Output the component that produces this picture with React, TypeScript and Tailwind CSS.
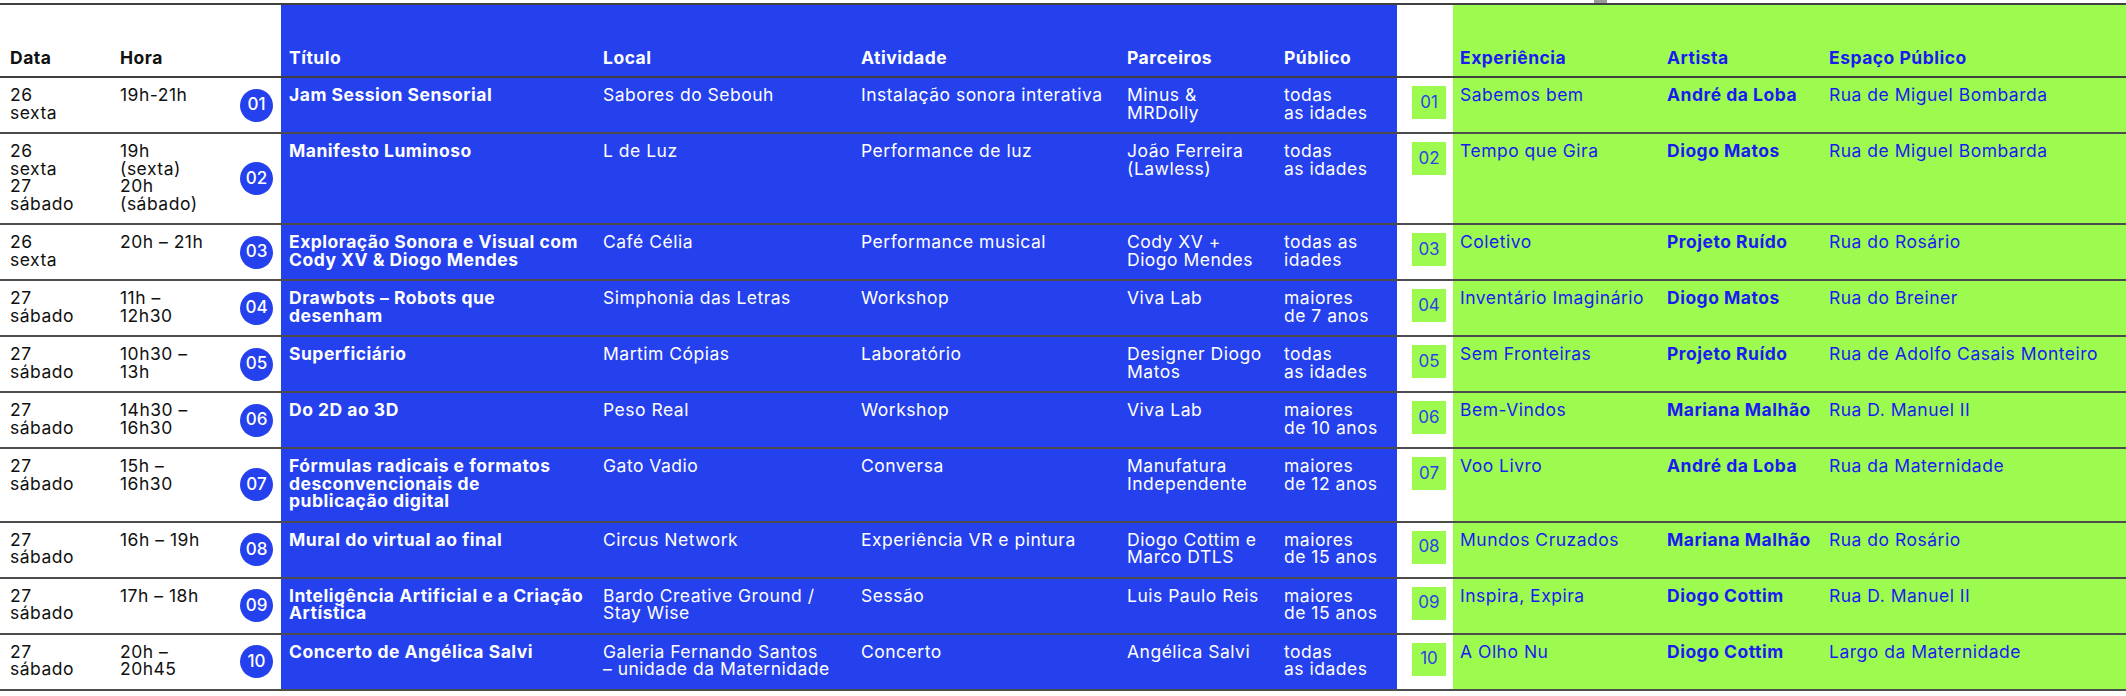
type Row = {
  data: string;
  hora: string;
  n: string;
  titulo: string;
  local: string;
  atividade: string;
  parceiros: string;
  publico: string;
  experiencia: string;
  artista: string;
  espaco: string;
};

const rows: Row[] = [
  { data: "26\nsexta", hora: "19h-21h", n: "01", titulo: "Jam Session Sensorial", local: "Sabores do Sebouh", atividade: "Instalação sonora interativa", parceiros: "Minus &\nMRDolly", publico: "todas\nas idades", experiencia: "Sabemos bem", artista: "André da Loba", espaco: "Rua de Miguel Bombarda" },
  { data: "26\nsexta\n27\nsábado", hora: "19h\n(sexta)\n20h\n(sábado)", n: "02", titulo: "Manifesto Luminoso", local: "L de Luz", atividade: "Performance de luz", parceiros: "João Ferreira\n(Lawless)", publico: "todas\nas idades", experiencia: "Tempo que Gira", artista: "Diogo Matos", espaco: "Rua de Miguel Bombarda" },
  { data: "26\nsexta", hora: "20h – 21h", n: "03", titulo: "Exploração Sonora e Visual com\nCody XV & Diogo Mendes", local: "Café Célia", atividade: "Performance musical", parceiros: "Cody XV +\nDiogo Mendes", publico: "todas as\nidades", experiencia: "Coletivo", artista: "Projeto Ruído", espaco: "Rua do Rosário" },
  { data: "27\nsábado", hora: "11h –\n12h30", n: "04", titulo: "Drawbots – Robots que\ndesenham", local: "Simphonia das Letras", atividade: "Workshop", parceiros: "Viva Lab", publico: "maiores\nde 7 anos", experiencia: "Inventário Imaginário", artista: "Diogo Matos", espaco: "Rua do Breiner" },
  { data: "27\nsábado", hora: "10h30 –\n13h", n: "05", titulo: "Superficiário", local: "Martim Cópias", atividade: "Laboratório", parceiros: "Designer Diogo\nMatos", publico: "todas\nas idades", experiencia: "Sem Fronteiras", artista: "Projeto Ruído", espaco: "Rua de Adolfo Casais Monteiro" },
  { data: "27\nsábado", hora: "14h30 –\n16h30", n: "06", titulo: "Do 2D ao 3D", local: "Peso Real", atividade: "Workshop", parceiros: "Viva Lab", publico: "maiores\nde 10 anos", experiencia: "Bem-Vindos", artista: "Mariana Malhão", espaco: "Rua D. Manuel II" },
  { data: "27\nsábado", hora: "15h –\n16h30", n: "07", titulo: "Fórmulas radicais e formatos\ndesconvencionais de\npublicação digital", local: "Gato Vadio", atividade: "Conversa", parceiros: "Manufatura\nIndependente", publico: "maiores\nde 12 anos", experiencia: "Voo Livro", artista: "André da Loba", espaco: "Rua da Maternidade" },
  { data: "27\nsábado", hora: "16h – 19h", n: "08", titulo: "Mural do virtual ao final", local: "Circus Network", atividade: "Experiência VR e pintura", parceiros: "Diogo Cottim e\nMarco DTLS", publico: "maiores\nde 15 anos", experiencia: "Mundos Cruzados", artista: "Mariana Malhão", espaco: "Rua do Rosário" },
  { data: "27\nsábado", hora: "17h – 18h", n: "09", titulo: "Inteligência Artificial e a Criação\nArtística", local: "Bardo Creative Ground /\nStay Wise", atividade: "Sessão", parceiros: "Luis Paulo Reis", publico: "maiores\nde 15 anos", experiencia: "Inspira, Expira", artista: "Diogo Cottim", espaco: "Rua D. Manuel II" },
  { data: "27\nsábado", hora: "20h –\n20h45", n: "10", titulo: "Concerto de Angélica Salvi", local: "Galeria Fernando Santos\n– unidade da Maternidade", atividade: "Concerto", parceiros: "Angélica Salvi", publico: "todas\nas idades", experiencia: "A Olho Nu", artista: "Diogo Cottim", espaco: "Largo da Maternidade" },
];

const grid =
  "grid grid-cols-[120px_120px_41px_314px_258px_266px_157px_121px_56px_207px_162px_1fr]";

const blue = "bg-[#2541ed] text-white";
const green = "bg-[#9dfb4f] text-[#1a1af2]";
const cell = "pt-[8px] pb-[11px] whitespace-pre";

const App = () => {
  return (
    <div
      className="w-[2126px] h-[696px] bg-white text-[17.5px] leading-[17.5px] tracking-[0.5px] text-[#111]"
      style={{ fontFamily: "Inter, 'Liberation Sans', sans-serif" }}
    >
      {/* faixa de scroll no topo */}
      <div className="h-[3px] pl-[1594px]">
        <div className="w-[13px] h-[3px] bg-[#9a9a9a]"></div>
      </div>

      {/* cabeçalho */}
      <div className={`${grid} h-[75px] border-t-2 border-b-2 border-black/75 font-bold`}>
        <div className="flex items-end pl-[10px] pb-[10px]">Data</div>
        <div className="flex items-end pb-[10px]">Hora</div>
        <div></div>
        <div className={`${blue} flex items-end pl-[8px] pb-[10px]`}>Título</div>
        <div className={`${blue} flex items-end pl-[8px] pb-[10px]`}>Local</div>
        <div className={`${blue} flex items-end pl-[8px] pb-[10px]`}>Atividade</div>
        <div className={`${blue} flex items-end pl-[8px] pb-[10px]`}>Parceiros</div>
        <div className={`${blue} flex items-end pl-[8px] pb-[10px]`}>Público</div>
        <div></div>
        <div className={`${green} flex items-end pl-[7px] pb-[10px]`}>Experiência</div>
        <div className={`${green} flex items-end pl-[7px] pb-[10px]`}>Artista</div>
        <div className={`${green} flex items-end pl-[7px] pb-[10px]`}>Espaço Público</div>
      </div>

      {rows.map((r) => (
        <div key={r.n} className={`${grid} border-b-2 border-black/70`}>
          <div className={`pl-[10px] ${cell}`}>{r.data}</div>
          <div className={cell}>{r.hora}</div>
          <div className="flex items-center">
            <span className="flex items-center justify-center w-[33px] h-[33px] rounded-full bg-[#2541ed] text-white text-[17px] tracking-normal font-medium">
              {r.n}
            </span>
          </div>
          <div className={`${blue} pl-[8px] ${cell} font-bold`}>{r.titulo}</div>
          <div className={`${blue} pl-[8px] ${cell}`}>{r.local}</div>
          <div className={`${blue} pl-[8px] ${cell}`}>{r.atividade}</div>
          <div className={`${blue} pl-[8px] ${cell}`}>{r.parceiros}</div>
          <div className={`${blue} pl-[8px] ${cell}`}>{r.publico}</div>
          <div className="pl-[15px] pt-[8px]">
            <span className="flex items-center justify-center w-[34px] h-[33px] bg-[#9dfb4f] text-[#2f43e6] text-[17px] tracking-normal">
              {r.n}
            </span>
          </div>
          <div className={`${green} pl-[7px] ${cell}`}>{r.experiencia}</div>
          <div className={`${green} pl-[7px] ${cell} font-bold`}>{r.artista}</div>
          <div className={`${green} pl-[7px] ${cell}`}>{r.espaco}</div>
        </div>
      ))}
    </div>
  );
};

export default App;
